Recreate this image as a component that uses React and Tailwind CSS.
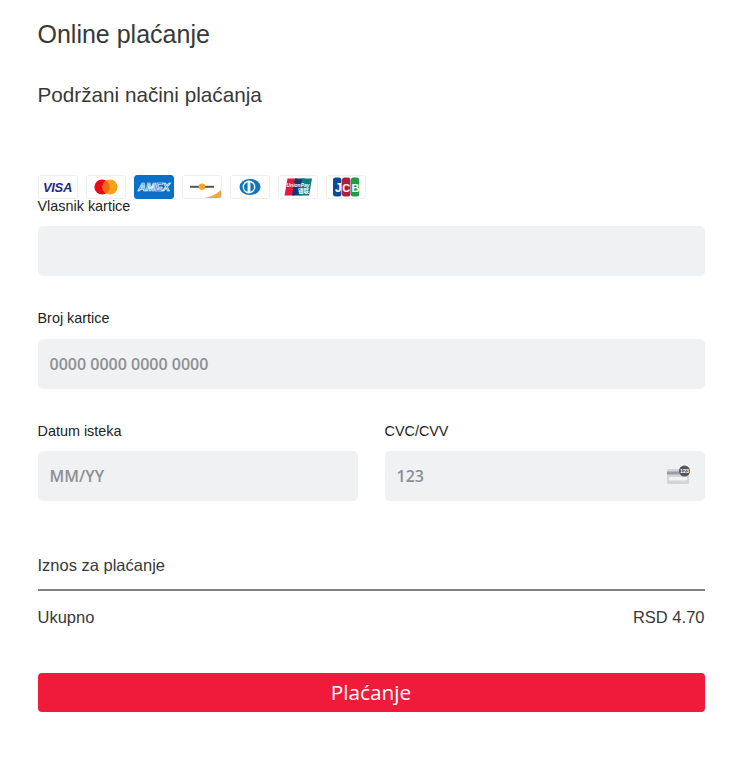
import React from "react";

const sans = "font-['Liberation_Sans',Arial,sans-serif]";
const open = "font-['Open_Sans',sans-serif]";

function Badge({ children, className = "border-[#eeeeee] bg-white" }) {
  return (
    <div className={`flex h-6 w-10 items-center justify-center overflow-hidden rounded-[3px] border ${className}`}>
      {children}
    </div>
  );
}

function Visa() {
  return (
    <Badge>
      <span className={`${sans} text-[13px] font-bold italic leading-none tracking-[-0.3px] text-[#1f2a7c]`}>VISA</span>
    </Badge>
  );
}

function Master() {
  return (
    <Badge>
      <svg width="24" height="16" viewBox="0 0 24 16">
        <circle cx="8" cy="8" r="7.6" fill="#e80b1c" />
        <circle cx="16" cy="8" r="7.6" fill="#f9a11b" />
        <path d="M12 1.6a7.6 7.6 0 0 1 0 12.8a7.6 7.6 0 0 1 0-12.8z" fill="#f5690f" />
      </svg>
    </Badge>
  );
}

function Amex() {
  return (
    <Badge className="border-[#0a6fc9] bg-[#0a6fc9]">
      <svg width="36" height="12" viewBox="0 0 36 12">
        <text x="18" y="10" textAnchor="middle" fontSize="11" fontStyle="italic" fontWeight="700" fill="#0a6fc9" stroke="#ffffff" strokeWidth="0.7" textLength="32" lengthAdjust="spacingAndGlyphs" fontFamily="Liberation Sans">AMEX</text>
      </svg>
    </Badge>
  );
}

function Maestro() {
  return (
    <Badge>
      <svg width="38" height="22" viewBox="0 0 38 22">
        <rect x="7" y="9.8" width="24" height="2" fill="#555555" />
        <circle cx="19" cy="10.8" r="3.2" fill="#f5a623" />
        <path d="M38 14v8H21c7-1 12-3.5 17-8z" fill="#f0a63a" />
      </svg>
    </Badge>
  );
}

function Diners() {
  return (
    <Badge>
      <svg width="24" height="18" viewBox="0 0 24 18">
        <ellipse cx="12" cy="9" rx="10.5" ry="8" fill="#0f75bc" />
        <circle cx="11" cy="9" r="6.4" fill="#ffffff" />
        <path d="M9.6 4.2a5 5 0 0 0 0 9.6zM12.4 4.2a5 5 0 0 1 0 9.6z" fill="#0f75bc" />
      </svg>
    </Badge>
  );
}

function UnionPay() {
  return (
    <Badge>
      <svg width="30" height="18" viewBox="0 0 30 18">
        <path d="M4.5 0.5h10l-3 17H1.5z" fill="#e01b3c" />
        <path d="M12 0.5h10l-3 17H9z" fill="#11376f" />
        <path d="M19 0.5h10l-3 17h-10z" fill="#0a7d80" />
        <text x="3.5" y="9" fontSize="6" fontStyle="italic" fontWeight="700" fill="#ffffff" textLength="23" lengthAdjust="spacingAndGlyphs" fontFamily="Liberation Sans">UnionPay</text>
        <text x="15" y="15" fontSize="5.5" fontWeight="700" fill="#ffffff" fontFamily="Noto Sans CJK SC">银联</text>
      </svg>
    </Badge>
  );
}

function Jcb() {
  return (
    <Badge>
      <svg width="28" height="20" viewBox="0 0 28 20">
        <rect x="1" y="0.5" width="8.4" height="19" rx="2.5" fill="#0c4a97" />
        <rect x="10" y="0.5" width="8.4" height="19" rx="2.5" fill="#b01c3c" />
        <rect x="18.8" y="0.5" width="8.4" height="19" rx="2.5" fill="#1b9e46" />
        <text x="3" y="15" fontSize="12" fontWeight="700" fill="#ffffff" fontFamily="Liberation Sans">J</text>
        <text x="10.2" y="15" fontSize="11" fontWeight="700" fill="#ffffff" fontFamily="Liberation Sans">C</text>
        <text x="19.4" y="15" fontSize="11" fontWeight="700" fill="#ffffff" fontFamily="Liberation Sans">B</text>
      </svg>
    </Badge>
  );
}

function CvvIcon() {
  return (
    <svg width="26" height="20" viewBox="0 0 26 20" className="absolute right-[13px] top-[14px]">
      <rect x="1" y="4" width="22" height="15" rx="1.5" fill="#d3d4d6" />
      <rect x="1" y="6.5" width="22" height="3" fill="#9c9da0" />
      <rect x="3" y="12" width="18" height="3.5" fill="#f2f2f3" />
      <circle cx="18.5" cy="6" r="5.5" fill="#55565a" />
      <text x="18.5" y="8" textAnchor="middle" fontSize="5.5" fill="#ffffff" fontFamily="Liberation Sans">123</text>
    </svg>
  );
}

function Field({ label, placeholder, className = "", labelClass = "mb-[12px]", children }) {
  return (
    <div className={className}>
      <div className={`${sans} ${labelClass} text-[14.4px] leading-[16px] text-[#222222]`}>{label}</div>
      <div className={`${open} relative flex h-[50px] items-center rounded-[5px] bg-[#f0f1f3] px-3 text-[16px] font-semibold text-[#8e8f93]`}>
        {placeholder}
        {children}
      </div>
    </div>
  );
}

export default function App() {
  return (
    <div className="h-[767px] w-[754px] bg-white pl-[37.5px] pr-[49.5px] pt-[18px]">
      <h1 className={`${sans} text-[25px] font-normal leading-[32px] text-[#383838]`}>Online plaćanje</h1>
      <h2 className={`${sans} mt-[33px] text-[20.7px] font-normal leading-[24px] text-[#383838]`}>Podržani načini plaćanja</h2>

      <div className="mt-[68px] flex gap-[8px]">
        <Visa />
        <Master />
        <Amex />
        <Maestro />
        <Diners />
        <UnionPay />
        <Jcb />
      </div>

      <Field label="Vlasnik kartice" className="-mt-px" />
      <Field label="Broj kartice" placeholder="0000 0000 0000 0000" className="mt-[34px]" labelClass="mb-[13px]" />

      <div className="mt-[34px] grid grid-cols-2 gap-[27px]">
        <Field label="Datum isteka" placeholder="MM/YY" />
        <Field label="CVC/CVV" placeholder="123">
          <CvvIcon />
        </Field>
      </div>

      <div className={`${sans} mt-[54px] border-b-2 border-[#808080] pb-[14px] text-[16.5px] leading-[20px] text-[#383838]`}>
        Iznos za plaćanje
      </div>
      <div className={`${sans} mt-[16px] flex justify-between text-[16.5px] leading-[20px] text-[#383838]`}>
        <span>Ukupno</span>
        <span>RSD 4.70</span>
      </div>

      <button type="button" className={`${open} mt-[46px] flex h-[39px] w-full items-center justify-center rounded-[4px] bg-[#f01a3b] text-[20.8px] text-white`}>
        Plaćanje
      </button>
    </div>
  );
}
